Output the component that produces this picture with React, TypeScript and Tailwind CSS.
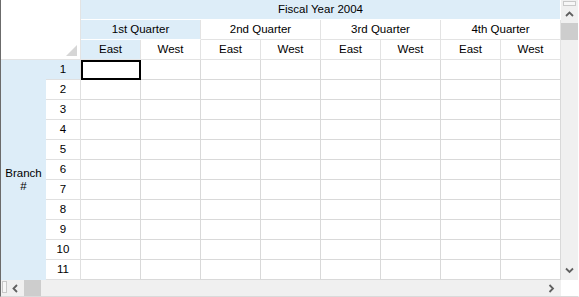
import React from "react";

const BLUE = "bg-[#ddedf8]";

function Chevron({ dir }: { dir: "up" | "down" | "left" | "right" }) {
  const paths: Record<string, string> = {
    up: "M1 5 L4.5 1.5 L8 5",
    down: "M1 1.5 L4.5 5 L8 1.5",
    left: "M5 1 L1.5 4.5 L5 8",
    right: "M1.5 1 L5 4.5 L1.5 8",
  };
  const horiz = dir === "up" || dir === "down";
  return (
    <svg width={horiz ? 9 : 7} height={horiz ? 7 : 9} viewBox={horiz ? "0 0 9 7" : "0 0 7 9"}>
      <path d={paths[dir]} fill="none" stroke="#606060" strokeWidth="1.8" />
    </svg>
  );
}

export default function App() {
  const quarters = ["1st Quarter", "2nd Quarter", "3rd Quarter", "4th Quarter"];
  const rows = Array.from({ length: 11 }, (_, i) => i + 1);
  const hdr = "flex items-center justify-center border-r border-b";
  return (
    <div
      className="w-[579px] h-[297px] flex flex-col bg-white border-l border-l-[#6b6b6b] border-b border-b-[#dadada] border-r border-r-white text-[11.5px] text-black overflow-hidden"
      style={{ fontFamily: '"Liberation Sans", Arial, sans-serif' }}
    >
      <div className="flex h-[280px]">
        <div className="w-[560px] h-[280px] overflow-hidden">
          <div className="grid grid-cols-[45px_35px_repeat(8,60px)] grid-rows-[repeat(14,20px)]">
            {/* top-left corner */}
            <div className="col-span-2 row-span-3 bg-white border-r border-b border-[#e3e3e3] flex items-end justify-end pr-[3px] pb-[3px]">
              <svg width="11" height="11" viewBox="0 0 11 11">
                <path d="M11 0 L11 11 L0 11 Z" fill="#d6d6d6" />
              </svg>
            </div>
            {/* Fiscal year */}
            <div className={`col-span-8 ${hdr} ${BLUE} border-white`}>Fiscal Year 2004</div>
            {/* Quarters */}
            {quarters.map((q, i) => (
              <div
                key={q}
                className={`col-span-2 ${hdr} ${i === 0 ? `${BLUE} border-b-white border-r-[#e3e3e3]` : "bg-white border-[#e3e3e3]"}`}
              >
                {q}
              </div>
            ))}
            {/* East / West */}
            {Array.from({ length: 8 }, (_, i) => (
              <div
                key={`ew${i}`}
                className={`${hdr} ${i === 0 ? `${BLUE} border-[#e3e3e3]` : "bg-white border-[#e3e3e3]"}`}
              >
                {i % 2 === 0 ? "East" : "West"}
              </div>
            ))}
            {/* Branch # */}
            <div className={`row-span-11 ${BLUE} flex flex-col items-center justify-start pt-[107px] leading-[13px]`}>
              <span>Branch</span>
              <span>#</span>
            </div>
            {rows.map((r) => (
              <React.Fragment key={r}>
                <div
                  className={`${hdr} border-[#e0e0e0] ${r === 1 ? BLUE : "bg-white"}`}
                >
                  {r}
                </div>
                {Array.from({ length: 8 }, (_, c) =>
                  r === 1 && c === 0 ? (
                    <div key={c} className="border-2 border-black bg-white" />
                  ) : (
                    <div key={c} className="border-r border-b border-[#d9d9d9] bg-white" />
                  )
                )}
              </React.Fragment>
            ))}
          </div>
        </div>
        {/* vertical scrollbar */}
        <div className="w-[17px] h-[280px] bg-[#f0f0f0] flex flex-col items-center relative">
          <div className="absolute left-[2px] top-[1px] w-[13px] h-[5px] border border-[#c8c8c8] bg-[#f7f7f7]" />
          <div className="h-[23px] w-full flex items-center justify-center pt-[6px]">
            <Chevron dir="up" />
          </div>
          <div className="h-[17px] w-full bg-[#cdcdcd]" />
          <div className="flex-1" />
          <div className="h-[17px] w-full flex items-center justify-center pb-[2px]">
            <Chevron dir="down" />
          </div>
        </div>
      </div>
      {/* horizontal scrollbar */}
      <div className="flex h-[16px]">
        <div className="w-[560px] h-[16px] bg-[#f0f0f0] flex items-center relative">
          <div className="absolute left-[1px] top-[1px] w-[5px] h-[12px] border border-[#c8c8c8] bg-[#f7f7f7]" />
          <div className="w-[23px] h-full flex items-center justify-center pl-[6px]">
            <Chevron dir="left" />
          </div>
          <div className="w-[17px] h-full bg-[#cdcdcd]" />
          <div className="flex-1" />
          <div className="w-[17px] h-full flex items-center justify-center pr-[3px]">
            <Chevron dir="right" />
          </div>
        </div>
        <div className="w-[17px] h-[16px] bg-white" />
      </div>
    </div>
  );
}
